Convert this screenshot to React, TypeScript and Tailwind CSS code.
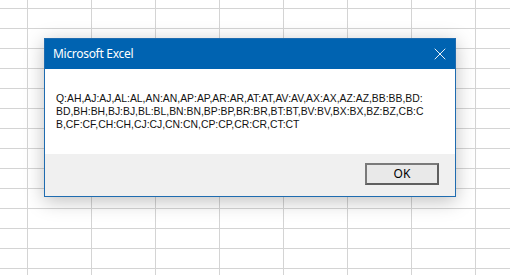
import { X } from "lucide-react";

const lines = [
  "Q:AH,AJ:AJ,AL:AL,AN:AN,AP:AP,AR:AR,AT:AT,AV:AV,AX:AX,AZ:AZ,BB:BB,BD:",
  "BD,BH:BH,BJ:BJ,BL:BL,BN:BN,BP:BP,BR:BR,BT:BT,BV:BV,BX:BX,BZ:BZ,CB:C",
  "B,CF:CF,CH:CH,CJ:CJ,CN:CN,CP:CP,CR:CR,CT:CT",
];

export default function App() {
  return (
    <div className="relative h-[275px] w-[510px] overflow-hidden bg-white bg-[linear-gradient(to_right,#d4d4d4_1px,transparent_1px),linear-gradient(to_bottom,#d4d4d4_1px,transparent_1px)] bg-[length:64px_20px] bg-[position:27px_8px]">
      {/* message box */}
      <div className="absolute left-[44px] top-[38px] flex h-[159px] w-[412px] flex-col border border-[#1f6cb0] bg-white shadow-[0_4px_18px_rgba(0,0,0,0.25)]">
        <div className="flex h-[30px] items-center justify-between bg-[#0063b1] pl-[8px] pr-[5px] text-white">
          <span className="font-['Noto_Sans',sans-serif] text-[12px] tracking-[-0.3px]">Microsoft Excel</span>
          <X size={20} strokeWidth={1.1} className="text-white" />
        </div>
        <div className="flex-1 pl-[11px] pt-[23px]">
          {lines.map((line) => (
            <div
              key={line}
              className="font-['Liberation_Sans',Arial,sans-serif] text-[10.4px] leading-[13px] text-[#111]"
            >
              {line}
            </div>
          ))}
        </div>
        <div className="flex h-[42px] items-start justify-end bg-[#f0f0f0] pr-[16px] pt-[9px]">
          <button
            type="button"
            className="flex h-[22px] w-[74px] items-center justify-center border-2 border-[#7a7a7a] border-b-[#5f5f5f] border-r-[#5f5f5f] bg-[#e9e9e9] font-['Noto_Sans',sans-serif] text-[12px] text-black"
          >
            OK
          </button>
        </div>
      </div>
    </div>
  );
}
